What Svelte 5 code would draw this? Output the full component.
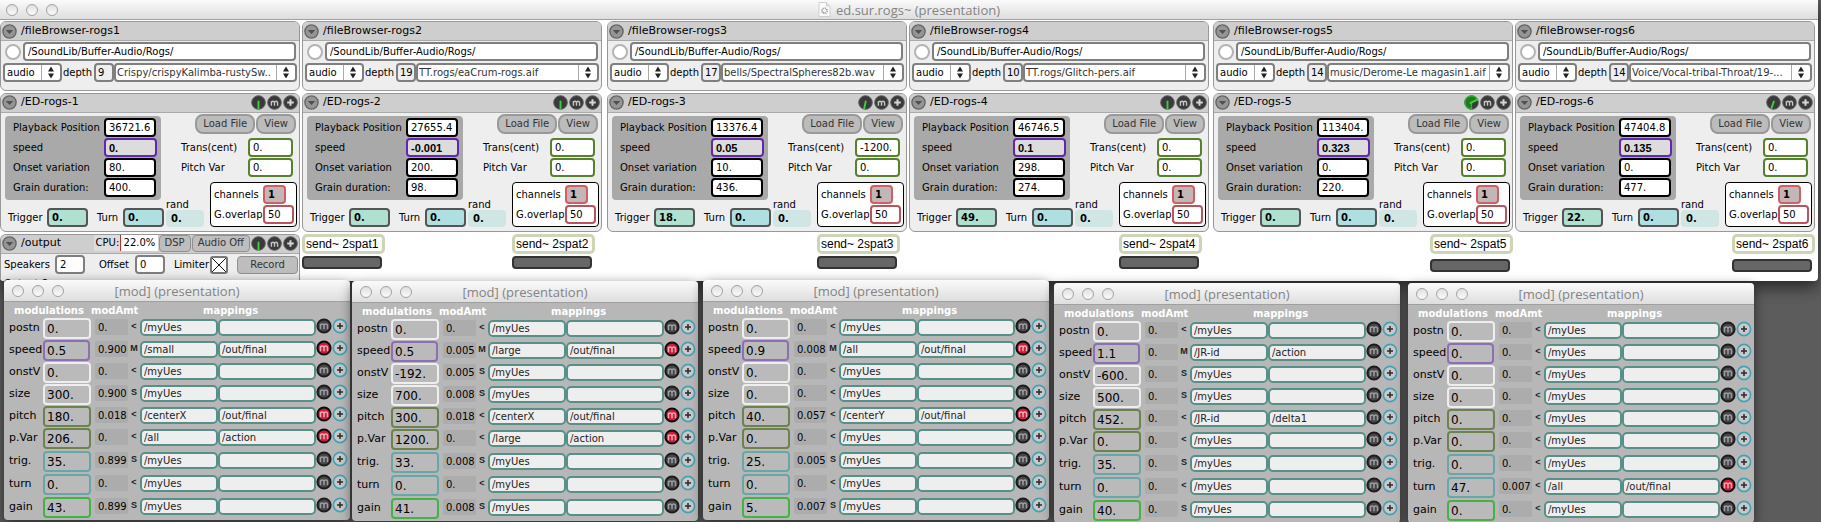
<script>
  const browsers = [
    { depth: '9', file: 'Crispy/crispyKalimba-rustySw..' },
    { depth: '19', file: 'TT.rogs/eaCrum-rogs.aif' },
    { depth: '17', file: 'bells/SpectralSpheres82b.wav' },
    { depth: '10', file: 'TT.rogs/Glitch-pers.aif' },
    { depth: '14', file: 'music/Derome-Le magasin1.aif' },
    { depth: '14', file: 'Voice/Vocal-tribal-Throat/19-...' }
  ];
  const players = [
    { pos: '36721.6', speed: '0.', onset: '80.', grain: '400.', trans: '0.', trig: '0.', dial: 0 },
    { pos: '27655.4', speed: '-0.001', onset: '200.', grain: '98.', trans: '0.', trig: '0.', dial: 0 },
    { pos: '13376.4', speed: '0.05', onset: '10.', grain: '436.', trans: '-1200.', trig: '18.', dial: 12 },
    { pos: '46746.5', speed: '0.1', onset: '298.', grain: '274.', trans: '0.', trig: '49.', dial: 0 },
    { pos: '113404.', speed: '0.323', onset: '0.', grain: '220.', trans: '0.', trig: '0.', dial: 245 },
    { pos: '47404.8', speed: '0.135', onset: '0.', grain: '477.', trans: '0.', trig: '22.', dial: 20 }
  ];

  const names = ['postn', 'speed', 'onstV', 'size', 'pitch', 'p.Var', 'trig.', 'turn', 'gain'];
  const tones = ['white', 'violet', 'white', 'white', 'olive', 'olive', 'aqua', 'aqua', 'green'];
  const idle = ['/myUes', ''];
  // Each row: value, amount, curve, source and target, active
  const row = (v, a, c, map = idle, on = false) => ({ v, a, c, from: map[0], to: map[1], on });
  const mods = [
    { x: 4, y: 280, rows: [
      row('0.', '0.', '<'),
      row('0.5', '0.900', 'M', ['/small', '/out/final'], true),
      row('0.', '0.', '<'),
      row('300.', '0.900', 'S'),
      row('180.', '0.018', '<', ['/centerX', '/out/final'], true),
      row('206.', '0.', '<', ['/all', '/action'], true),
      row('35.', '0.899', 'S'),
      row('0.', '0.', '<'),
      row('43.', '0.899', 'S')
    ] },
    { x: 352, y: 281, rows: [
      row('0.', '0.', '<'),
      row('0.5', '0.005', 'M', ['/large', '/out/final'], true),
      row('-192.', '0.005', 'S'),
      row('700.', '0.008', 'S'),
      row('300.', '0.018', '<', ['/centerX', '/out/final'], true),
      row('1200.', '0.', '<', ['/large', '/action'], true),
      row('33.', '0.008', 'S'),
      row('0.', '0.', '<'),
      row('41.', '0.008', 'S')
    ] },
    { x: 703, y: 280, rows: [
      row('0.', '0.', '<'),
      row('0.9', '0.008', 'M', ['/all', '/out/final'], true),
      row('0.', '0.', '<'),
      row('0.', '0.', '<'),
      row('40.', '0.057', '<', ['/centerY', '/out/final'], true),
      row('0.', '0.', '<'),
      row('25.', '0.005', 'S'),
      row('0.', '0.', '<'),
      row('5.', '0.007', 'S')
    ] },
    { x: 1054, y: 283, rows: [
      row('0.', '0.', '<'),
      row('1.1', '0.', 'M', ['/JR-id', '/action']),
      row('-600.', '0.', 'S'),
      row('500.', '0.', 'S'),
      row('452.', '0.', '<', ['/JR-id', '/delta1']),
      row('0.', '0.', '<'),
      row('35.', '0.', 'S'),
      row('0.', '0.', '<'),
      row('40.', '0.', 'S')
    ] },
    { x: 1408, y: 283, rows: [
      row('0.', '0.', '<'),
      row('0.', '0.', '<'),
      row('0.', '0.', '<'),
      row('0.', '0.', '<'),
      row('0.', '0.', '<'),
      row('0.', '0.', '<'),
      row('0.', '0.', '<'),
      row('47.', '0.007', '<', ['/all', '/out/final'], true),
      row('0.', '0.', '<')
    ] }
  ];
</script>

{#snippet lights()}
  <div class="lights">
    <button aria-label="Close"></button>
    <button aria-label="Minimize"></button>
    <button aria-label="Zoom"></button>
  </div>
{/snippet}

{#snippet fold()}
  <button class="icon" aria-label="Panel menu">
    <svg viewBox="0 0 15 15"><circle cx="7.5" cy="7.5" r="6.6" fill="#959595" stroke="#666" stroke-width="1.4" /><path d="M3.8 6h7.4l-3.7 4z" fill="#505050" /></svg>
  </button>
{/snippet}

{#snippet tools(dial)}
  <button class="icon" aria-label="Level">
    <svg viewBox="0 0 15 15">
      <circle cx="7.5" cy="7.5" r="6.8" fill="#3a3a3a" stroke="#5c5c5c" />
      {#if dial > 90}<path d="M7.5 7.5V14A6.5 6.5 0 1 1 13.4 4.8z" fill="#1f7a22" stroke="#2fb52f" stroke-width="1.3" />{/if}
      <path d="M7.5 6.5v7" stroke="#3bd03b" stroke-width="1.9" stroke-linecap="round" transform="rotate({dial} 7.5 7.5)" />
    </svg>
  </button>
  <button class="icon" aria-label="Mute">
    <svg viewBox="0 0 15 15"><circle cx="7.5" cy="7.5" r="6.8" fill="#3a3a3a" stroke="#5c5c5c" /><path d="M4.4 10.8V6M4.4 7.7q.3-1.4 1.6-1.4t1.5 1.5v3M7.5 7.7q.3-1.4 1.6-1.4t1.5 1.5v3" fill="none" stroke="#c4c4c4" stroke-width="1.4" /></svg>
  </button>
  <button class="icon" aria-label="Add">
    <svg viewBox="0 0 15 15"><circle cx="7.5" cy="7.5" r="6.8" fill="#3a3a3a" stroke="#5c5c5c" /><path d="M7.5 4.2v6.6M4.2 7.5h6.6" stroke="#d6d6d6" stroke-width="2" /></svg>
  </button>
{/snippet}

{#snippet menu(label, text, cls)}
  <div class="menu {cls}">
    <select aria-label={label}><option>{text}</option></select>
    <span class="arrows"><svg viewBox="0 0 8 13"><path d="M1 5.5L4 .5l3 5zM1 7.5l3 5 3-5z" fill="#222" /></svg></span>
  </div>
{/snippet}

<div class="desktop">
  <main class="window main">
    <header class="titlebar">
      {@render lights()}
      <h1>
        <svg class="doc" viewBox="0 0 13 15"><path d="M1 .5h7.5L12 4v10.5H1z" fill="#fafafa" stroke="#cfcfcf" /><path d="M8.5.5V4H12" fill="#e4e4e4" stroke="#cfcfcf" /><circle cx="6.5" cy="8.8" r="2.6" fill="none" stroke="#aaa" stroke-width="1.8" stroke-dasharray="1.3 .7" /><path d="M4.5 9.5l2 1.6" stroke="#e08a5a" /><path d="M7.5 6.5L9 8" stroke="#6ab0c8" /></svg>
        ed.sur.rogs~ (presentation)
      </h1>
    </header>

    <div class="columns">
      {#each players as p, i}
        {@const n = i + 1}
        {@const b = browsers[i]}
        <div class="column">
          <section class="panel browser">
            <header>{@render fold()}<h2>/fileBrowser-rogs{n}</h2></header>
            <div class="path">
              <button class="bang" aria-label="Reload folder"></button>
              <input class="box" aria-label="Folder" value="/SoundLib/Buffer-Audio/Rogs/" />
            </div>
            <div class="pick">
              {@render menu('File type', 'audio', 'short')}
              <label for="depth{n}">depth</label>
              <input id="depth{n}" class="box depth" value={b.depth} />
              {@render menu('File', b.file, 'long')}
            </div>
          </section>

          <section class="panel player">
            <header>{@render fold()}<h2>/ED-rogs-{n}</h2>{@render tools(p.dial)}</header>
            <div class="body">
              <div class="left">
                <div class="params">
                  <label for="pos{n}">Playback Position</label><input id="pos{n}" class="box" value={p.pos} />
                  <label for="speed{n}">speed</label><input id="speed{n}" class="box speed" value={p.speed} />
                  <label for="onset{n}">Onset variation</label><input id="onset{n}" class="box" value={p.onset} />
                  <label for="grain{n}">Grain duration:</label><input id="grain{n}" class="box" value={p.grain} />
                </div>
                <div class="triggers">
                  <label for="trig{n}">Trigger</label><input id="trig{n}" class="box mint" value={p.trig} />
                  <label for="turn{n}">Turn</label><input id="turn{n}" class="box sky" value="0." />
                  <div class="rand"><label for="rand{n}">rand</label><input id="rand{n}" class="box" value="0." /></div>
                </div>
              </div>
              <div class="right">
                <div class="buttons"><button class="pill">Load File</button><button class="pill">View</button></div>
                <div class="pitch">
                  <label for="trans{n}">Trans(cent)</label><input id="trans{n}" class="box" value={p.trans} />
                  <label for="pvar{n}">Pitch Var</label><input id="pvar{n}" class="box" value="0." />
                </div>
                <div class="channels">
                  <label for="chan{n}">channels</label><input id="chan{n}" class="box chan" value="1" />
                  <label for="over{n}">G.overlap</label><input id="over{n}" class="box" value="50" />
                </div>
              </div>
            </div>
          </section>

          {#if i === 0}
            <section class="panel output">
              <header>
                {@render fold()}<h2>/output</h2>
                <span class="cpu"><span>CPU:</span><b>22.0%</b></span>
                <button class="flat">DSP</button><button class="flat">Audio Off</button>
                {@render tools(0)}
              </header>
              <div class="io">
                <label for="speakers">Speakers</label><input id="speakers" class="box" value="2" />
                <label for="offset">Offset</label><input id="offset" class="box" value="0" />
                <label for="limiter">Limiter</label><input id="limiter" type="checkbox" checked />
                <button class="flat">Record</button>
              </div>
              <p>Output 2</p>
            </section>
          {:else}
            <div class="sends" class:low={i > 3}>
              {#if i === 1}
                <div class="send"><span>send~ 2spat1</span><i></i></div>
              {/if}
              <div class="send last"><span>send~ 2spat{n}</span><i></i></div>
            </div>
          {/if}
        </div>
      {/each}
    </div>
  </main>

  {#each mods as w, k}
    <section class="window mod" style:left="{w.x}px" style:top="{w.y}px">
      <header class="titlebar">{@render lights()}<h1>[mod] (presentation)</h1></header>
      <div class="heads"><span>modulations</span><span>modAmt</span><span>mappings</span></div>
      {#each w.rows as r, j}
        <div class="row" class:tall={j > 4}>
          <label for="m{k}-{j}">{names[j]}</label>
          <input id="m{k}-{j}" class="value {tones[j]}" value={r.v} />
          <input class="amt" aria-label="{names[j]} amount" value={r.a} />
          <button class="curve" aria-label="{names[j]} curve">{r.c}</button>
          <input class="map from" aria-label="{names[j]} source" value={r.from} />
          <input class="map" aria-label="{names[j]} target" value={r.to} />
          <button class="dot" aria-label="Mapping active">
            <svg viewBox="0 0 16 16"><circle cx="8" cy="8" r="6.6" fill={r.on ? '#d01c3c' : '#464646'} stroke={r.on ? '#0a0a0a' : '#1c1c1c'} stroke-width="2" /><path d="M4.5 11.2V5.8M4.5 7.7q.3-1.6 1.8-1.6T8 7.7v3.5M8 7.7q.3-1.6 1.8-1.6t1.7 1.6v3.5" fill="none" stroke={r.on ? '#e8aab2' : '#9c9ca4'} stroke-width="1.5" /></svg>
          </button>
          <button class="dot" aria-label="Add mapping">
            <svg viewBox="0 0 16 16"><circle cx="8" cy="8" r="6.6" fill="#c9c9c9" stroke="#43a2b4" stroke-width="1.6" /><path d="M8 5v6M5 8h6" stroke="#2a2a2a" stroke-width="1.5" /></svg>
          </button>
        </div>
      {/each}
    </section>
  {/each}
</div>

<style>
  :global(body) { margin: 0; background: #5c5c5c; overflow: hidden; }
  .desktop {
    position: relative;
    min-height: 100vh;
    overflow: hidden;
    background: #5c5c5c;
    font: 10px/14px "DejaVu Sans", Verdana, sans-serif;
    color: #000;
  }
  .desktop * { box-sizing: border-box; }
  button, input, select { font: inherit; color: inherit; margin: 0; padding: 0; }
  button { border: 0; background: none; }
  h1, h2, p { margin: 0; font-weight: normal; }
  svg { display: block; }

  .window { overflow: hidden; }
  .main {
    margin-right: 3px;
    height: 281px;
    background: #fff;
    border-radius: 0 0 4px 4px;
    box-shadow: 0 6px 16px rgba(0, 0, 0, 0.6);
  }
  .titlebar {
    display: grid;
    grid-template-columns: 1fr auto 1fr;
    align-items: center;
    height: 20px;
    padding: 0 6px;
    background: linear-gradient(#fafafa, #dedede);
    border-bottom: 1px solid #a0a0a0;
  }
  .titlebar h1 {
    display: flex;
    align-items: center;
    gap: 5px;
    font: 13px/18px "Open Sans", "Lucida Grande", sans-serif;
    color: #838383;
    white-space: nowrap;
  }
  .doc { width: 13px; height: 15px; }
  .lights { display: flex; gap: 8px; }
  .lights button {
    width: 12px;
    height: 12px;
    border: 1px solid #a2a2a2;
    border-radius: 50%;
    background: linear-gradient(#e0e0e0, #fbfbfb);
  }

  .columns { display: flex; gap: 2px; padding: 1px 3px 0 0; }
  .column { flex: 1; min-width: 0; display: flex; flex-direction: column; gap: 2px; }
  .column:nth-child(3) { margin-left: 3px; }
  .column:nth-child(5) { margin-left: 2px; }

  .panel { background: #eee; border: 1px solid #989898; border-radius: 6px; overflow: hidden; }
  .panel header {
    display: flex;
    align-items: center;
    gap: 1px;
    height: 19px;
    padding: 0 1px 2px;
    background: #cecece;
    border-bottom: 1px solid #aaa;
  }
  .browser header { padding-bottom: 0; }
  h2 { flex: 1; padding-left: 3px; font-size: 11px; line-height: 16px; white-space: nowrap; }
  .icon { width: 15px; height: 15px; flex: none; }
  .icon svg { width: 15px; height: 15px; }

  .box {
    min-width: 0;
    height: 19px;
    padding: 0 0 0 3px;
    background: #fff;
    border: 2px solid #7f7f7f;
    border-radius: 4px;
  }
  .browser { height: 70px; }
  .path { display: flex; align-items: center; gap: 2px; padding: 1px 3px 0 4px; }
  .path .box { flex: 1; }
  .bang { width: 16px; height: 16px; background: #fff; border: 2px solid #b4b4b4; border-radius: 50%; }
  .pick { display: flex; align-items: center; padding: 2px 2px 0; }
  .pick label { width: 32px; padding-left: 1px; }
  .menu { display: flex; height: 19px; background: #fff; border: 2px solid #7f7f7f; border-radius: 4px; min-width: 0; }
  .menu select { flex: 1; min-width: 0; border: 0; background: none; appearance: none; padding-left: 2px; }
  .short { width: 59px; }
  .long { flex: 1; }
  .long select { color: #333; padding-left: 1px; }
  .depth { width: 20px; padding-left: 2px; background: #eee; }
  .arrows { display: grid; place-items: center; width: 19px; border-left: 1px solid #aaa; pointer-events: none; }
  .arrows svg { width: 8px; height: 13px; }

  .player { height: 139px; }
  .body { display: flex; justify-content: space-between; padding: 1px 2px 0 4px; }
  .left { width: 200px; flex: none; padding-top: 2px; }
  .params {
    display: grid;
    grid-template-columns: 91px 53px;
    row-gap: 1px;
    align-items: center;
    width: 156px;
    height: 84px;
    padding: 2px 0 3px 8px;
    background: #a9a9a9;
    border-radius: 4px;
  }
  .params .box { width: 52px; border-color: #000; }
  .params .speed { width: 53px; background: #dcdcdc; border-color: #6227ad; font: bold 11px/14px "Liberation Sans", Arial, sans-serif; }
  .triggers { display: flex; align-items: flex-end; height: 27px; }
  .triggers label { width: 42px; padding-left: 3px; line-height: 19px; }
  .triggers label[for^="turn"] { width: 35px; padding-left: 9px; }
  .triggers .box { width: 41px; font-weight: bold; border-color: #555; }
  .mint { background: #b0e0cf; }
  .sky { background: #b0dfe2; }
  .triggers .rand { display: flex; flex-direction: column; margin-left: 2px; }
  .triggers .rand label { width: auto; padding: 0; line-height: 10px; }
  .triggers .rand .box { width: 38px; height: 17px; border-color: transparent; background: #d0e6e5; }

  .right { width: 117px; flex: none; margin-left: -28px; }
  .buttons { display: flex; justify-content: flex-end; gap: 1px; padding-right: 1px; }
  .pill { height: 20px; padding: 0 6px; border: 2px solid #999; border-radius: 8px; background: #bcbcbc; color: #333; white-space: nowrap; }
  .pitch { display: grid; grid-template-columns: 1fr 45px; row-gap: 1px; align-items: center; padding: 4px 4px 5px 1px; }
  .pitch .box { border-color: #58812d; }
  .channels {
    display: grid;
    grid-template-columns: 50px 31px;
    row-gap: 1px;
    align-items: center;
    width: 87px;
    height: 45px;
    margin-left: auto;
    padding: 2px;
    background: #fff;
    border: 1px solid #000;
    border-radius: 4px;
  }
  .channels label { padding-left: 1px; }
  .channels .box { border-color: #b8545a; }
  .channels .chan { width: 23px; background: #c3b6b6; border-color: #cf5f62; font-weight: bold; }

  .output { height: 60px; border-bottom: 0; }
  .cpu { display: flex; width: 64px; height: 16px; line-height: 16px; white-space: nowrap; background: #fff; }
  .cpu span { width: 27px; padding-left: 2px; background: #ddd; border-right: 1px solid #c03030; }
  .cpu b { padding-left: 3px; font-weight: normal; }
  .flat { height: 17px; padding: 0 5px; border: 1px solid #909090; border-radius: 4px; background: #bebebe; color: #333; white-space: nowrap; }
  .io { display: flex; align-items: center; padding: 1px 1px 0 3px; }
  .io .box { width: 30px; }
  .io label { width: 51px; }
  .io label[for="offset"] { width: 50px; padding-left: 14px; }
  .io label[for="limiter"] { width: 45px; padding-left: 9px; }
  .io input[type="checkbox"] {
    appearance: none;
    width: 18px;
    height: 18px;
    border: 2px solid #777;
    border-radius: 3px;
    background:
      linear-gradient(45deg, transparent 47%, #111 47%, #111 53%, transparent 53%),
      linear-gradient(-45deg, transparent 47%, #111 47%, #111 53%, transparent 53%),
      #fff;
  }
  .io .flat { width: 61px; height: 18px; margin-left: auto; }
  .output p { padding: 3px 3px 0; white-space: nowrap; }

  .sends { display: flex; padding-right: 7px; }
  .send { width: 83px; }
  .send.last { margin-left: auto; }
  .send span {
    display: block;
    height: 20px;
    padding-left: 1px;
    border: 3px solid #ccd5b4;
    border-radius: 5px;
    font: 12px/14px "Liberation Sans", Arial, sans-serif;
    white-space: nowrap;
  }
  .send i { display: block; width: 80px; height: 13px; margin-top: 2px; background: #666; border: 2px solid #333; border-radius: 4px; }
  .sends.low { padding-right: 0; }
  .low .send i { margin-top: 5px; }

  .mod {
    position: absolute;
    width: 346px;
    height: 240px;
    background: #b7b7b7;
    border-radius: 4px;
    box-shadow: 0 3px 12px rgba(0, 0, 0, 0.55);
  }
  .mod .titlebar { height: 22px; padding: 0 8px; }
  .heads { display: grid; grid-template-columns: 77px 112px 1fr; padding: 2px 0 0 10px; font-weight: bold; color: #fff; }
  .row { display: flex; height: 22px; padding-left: 5px; }
  .row.tall { height: 23px; }
  .row label { width: 34px; font-size: 11px; line-height: 20px; white-space: nowrap; }
  .row input { min-width: 0; }
  .value { width: 48px; height: 21px; padding: 0 2px; border: 2px solid #eee; border-radius: 4px; background: #bababa; font-size: 12px; }
  .violet { border-color: #8f6fb3; width: 47px; margin-right: 1px; }
  .olive { border-color: #6c8350; }
  .aqua { border-color: #68a6a8; }
  .green { border-color: #45b245; }
  .amt { width: 33px; height: 16px; margin: 1px 0 0 4px; padding: 0 0 0 3px; border: 0; border-radius: 2px; background: #acacac; }
  .curve { width: 12px; height: 16px; font: bold 9px/16px "Liberation Sans", Arial, sans-serif; color: #222; }
  .map { width: 98px; height: 17px; margin-top: 1px; padding: 0 2px; border: 2px solid #579089; border-radius: 5px; background: #eee; color: #222; }
  .map.from { width: 78px; }
  .dot { width: 16px; height: 16px; flex: none; }
  .dot svg { width: 16px; height: 16px; }
</style>
